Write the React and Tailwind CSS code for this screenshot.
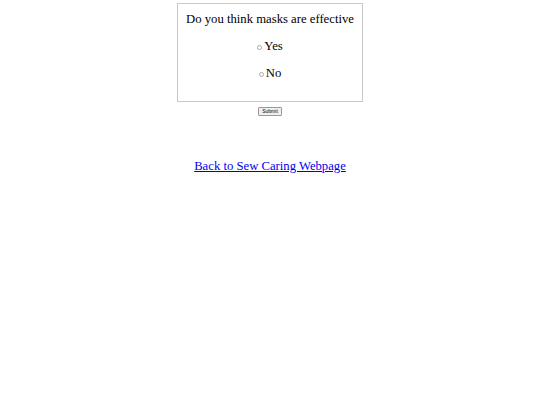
export default function App() {
  return (
    <div className="w-[540px] h-[405px] bg-white" style={{ fontFamily: '"Liberation Serif", serif' }}>
      <div className="flex flex-col items-center pt-[3px]">
        <div className="w-[186px] h-[99px] border border-[#c8c8c8] flex flex-col items-center text-[12.7px] text-black leading-none whitespace-nowrap">
          <div className="mt-[9px]">Do you think masks are effective</div>
          <div className="mt-[14px] flex items-center">
            <span className="inline-block w-[5px] h-[5px] rounded-full border border-[#aaa] mr-[2px] mt-[2px]"></span>
            <span>Yes</span>
          </div>
          <div className="mt-[15px] flex items-center">
            <span className="inline-block w-[5px] h-[5px] rounded-full border border-[#aaa] mr-[2px] mt-[2px]"></span>
            <span>No</span>
          </div>
        </div>
        <button className="mt-[5px] h-[9px] px-[3px] border border-[#999] rounded-[1px] bg-[#efefef] text-[5px] leading-none text-black" style={{ fontFamily: '"Liberation Sans", sans-serif' }}>Submit</button>
        <a href="#" className="mt-[44px] text-[12.7px] leading-none text-[#0000ee] underline">Back to Sew Caring Webpage</a>
      </div>
    </div>
  );
}
